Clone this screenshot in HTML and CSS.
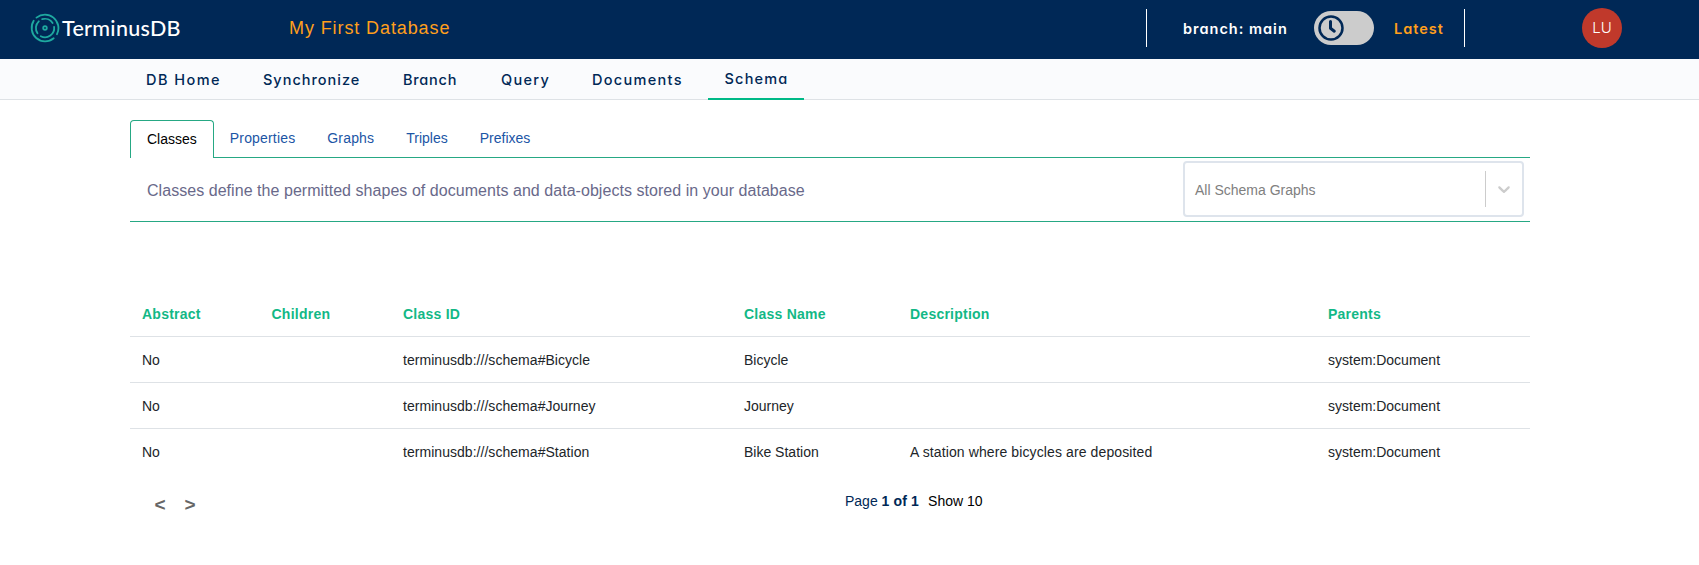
FILE: index.html
```html
<!DOCTYPE html>
<html lang="en">
<head>
<meta charset="utf-8">
<title>TerminusDB</title>
<link rel="stylesheet" href="styles.css">
</head>
<body>
<header class="topbar">
  <div class="brand">
    <svg class="brand-mark" width="30" height="30" viewBox="0 0 30 30" fill="none" stroke="#1ea9a0" stroke-width="1.800" stroke-linecap="round">
      <path d="M6.500 4.600A13.500 13.500 0 0 1 27 21.200"/>
      <path d="M3.700 7.700A13.500 13.500 0 0 0 23.700 25.300"/>
      <path d="M12.200 6.200A9.200 9.200 0 0 1 22.600 10"/>
      <path d="M8.800 8.300A9.200 9.200 0 0 0 7.500 20.200"/>
      <path d="M10.800 23.200A9.200 9.200 0 0 0 24.100 13.800"/>
      <circle cx="15" cy="15" r="1.800"/>
    </svg>
    <span class="brand-name">TerminusDB</span>
  </div>
  <div class="db-name">My First Database</div>
  <div class="branch-box">
    <span class="branch">branch: main</span>
    <span class="toggle">
      <svg width="26" height="26" viewBox="0 0 26 26" fill="none" stroke="#002856">
        <circle cx="13" cy="13" r="11.500" stroke-width="2.500"/>
        <path d="M12.500 6.500V13.300L16.300 16.200" stroke-width="3" stroke-linecap="round" stroke-linejoin="round"/>
      </svg>
    </span>
    <span class="latest">Latest</span>
  </div>
  <div class="avatar">LU</div>
</header>
<nav class="subnav">
  <a class="nav-item home">DB Home</a>
  <a class="nav-item sync">Synchronize</a>
  <a class="nav-item branch-link">Branch</a>
  <a class="nav-item query">Query</a>
  <a class="nav-item docs">Documents</a>
  <a class="nav-item schema active">Schema</a>
</nav>
<main class="content">
  <div class="tabs">
    <a class="tab selected">Classes</a>
    <a class="tab wide">Properties</a>
    <a class="tab wide">Graphs</a>
    <a class="tab">Triples</a>
    <a class="tab">Prefixes</a>
  </div>
  <section class="intro">
    <p class="intro-text">Classes define the permitted shapes of documents and data-objects stored in your database</p>
    <div class="select">
      <span class="select-value">All Schema Graphs</span>
      <span class="select-arrow">
        <svg width="20" height="20" viewBox="0 0 20 20" fill="#ccc"><path d="M4.516 7.548c0.436-0.446 1.043-0.481 1.576 0l3.908 3.747 3.908-3.747c0.533-0.481 1.141-0.446 1.574 0 0.436 0.445 0.408 1.197 0 1.615-0.406 0.418-4.695 4.502-4.695 4.502-0.217 0.223-0.502 0.335-0.787 0.335s-0.570-0.112-0.789-0.335c0 0-4.287-4.084-4.695-4.502s-0.436-1.170 0-1.615z"/></svg>
      </span>
    </div>
  </section>
  <div class="table">
    <div class="row head"><span>Abstract</span><span>Children</span><span>Class ID</span><span>Class Name</span><span>Description</span><span>Parents</span></div>
    <div class="row"><span>No</span><span></span><span class="id">terminusdb:///schema#Bicycle</span><span>Bicycle</span><span></span><span>system:Document</span></div>
    <div class="row"><span>No</span><span></span><span class="id">terminusdb:///schema#Journey</span><span>Journey</span><span></span><span>system:Document</span></div>
    <div class="row"><span>No</span><span></span><span class="id">terminusdb:///schema#Station</span><span>Bike Station</span><span class="description">A station where bicycles are deposited</span><span>system:Document</span></div>
  </div>
  <footer class="pager">
    <div class="pager-buttons"><span>&lt;</span><span>&gt;</span></div>
    <div class="pager-info"><span>Page <b>1 of 1</b></span><span class="show">Show 10</span></div>
  </footer>
</main>
</body>
</html>
```

FILE: styles.css
```css
* { box-sizing: border-box; }
body { margin: 0; background: #fff; color: #212529; font: 14px/20px "Liberation Sans", Arial, sans-serif; }

.topbar { display: flex; align-items: center; height: 59px; background: #002856; color: #fff; }
.brand { display: flex; align-items: center; width: 289px; height: 30px; padding-left: 29.500px; margin-bottom: 4px; }
.brand-name { margin-left: 2.500px; font: 500 21.500px/30px Lato, sans-serif; letter-spacing: .3px; }
.db-name { width: 857px; margin-bottom: 4px; color: #ff9f1c; font-size: 18px; letter-spacing: .9px; }
.branch-box { display: flex; align-items: center; width: 319px; height: 38px; margin-bottom: 3px; padding-left: 36px; border: solid #fff; border-width: 0 1px; font: 600 14.500px/20px Inter, sans-serif; font-feature-settings: "cv11"; letter-spacing: 1px; }
.branch { width: 131px; padding-top: 1px; white-space: nowrap; }
.toggle { display: flex; align-items: center; width: 60px; height: 34px; padding-left: 4px; border-radius: 17px; background: #ccc; }
.latest { margin-left: 20px; padding-top: 1px; color: #ff9f1c; }
.avatar { width: 40px; height: 40px; margin: 0 0 3px 117px; border-radius: 50%; background: #c0392b; font: 300 15px/40px Inter, sans-serif; text-align: center; }

.subnav { display: flex; height: 41px; padding-left: 130px; background: #fafbfd; border-bottom: 1px solid #dee2e6; color: #002856; font: 500 14.500px/20px Inter, sans-serif; font-feature-settings: "cv11"; letter-spacing: 1px; }
.nav-item { height: 41px; padding: 11px 0 0 16px; white-space: nowrap; }
.home { width: 117px; letter-spacing: 1.450px; }
.sync { width: 140px; }
.branch-link { width: 98px; letter-spacing: .750px; }
.query { width: 91px; letter-spacing: 1.300px; }
.docs { width: 132px; letter-spacing: 1.300px; }
.schema { width: 96px; letter-spacing: 1.200px; }
.nav-item.active { padding: 10px 0 0 16.500px; border-bottom: 2px solid #00b987; }

.content { width: 1400px; margin-left: 130px; padding-top: 20px; }
.tabs { display: flex; height: 38px; border-bottom: 1px solid #26a884; color: #1b55a5; }
.tab { height: 37px; padding: 8px 16px; }
.wide { letter-spacing: .170px; }
.selected { height: 38px; border: 1px solid #26a884; border-bottom: 0; border-radius: 4px 4px 0 0; background: #fff; color: #000; }
.intro { display: flex; justify-content: space-between; height: 64px; padding: 3px 6px 0 17px; border-bottom: 1px solid #26a884; }
.intro-text { margin: 20px 0 0; color: #69698a; font-size: 16px; letter-spacing: .045px; }
.select { display: flex; align-items: center; justify-content: space-between; width: 341px; height: 56px; border: 2px solid #dee4ec; border-radius: 4px; color: #808080; }
.select-value { padding: 2px 0 0 10px; }
.select-arrow { display: flex; align-items: center; width: 37px; height: 36px; padding-left: 8px; border-left: 1px solid #ccc; }

.table { margin-top: 69px; }
.row { display: grid; grid-template-columns: 129.500px 131.500px 341px 166px 418px 1fr; height: 46px; padding: 13px 0 0 12px; border-bottom: 1px solid #dee2e6; white-space: nowrap; }
.row:last-child { border-bottom: 0; }
.head { color: #12b886; font-weight: 700; letter-spacing: .240px; }
.id { letter-spacing: .040px; }
.description { letter-spacing: .110px; }
.pager { display: flex; height: 56px; }
.pager-buttons { display: flex; gap: 19px; width: 715px; padding: 20px 0 0 24.500px; color: #666; font-size: 19px; font-weight: 700; }
.pager-info { display: flex; gap: 9px; padding-top: 16px; color: #002856; }
.pager-info b { letter-spacing: .150px; }
.show { color: #000; }
```
